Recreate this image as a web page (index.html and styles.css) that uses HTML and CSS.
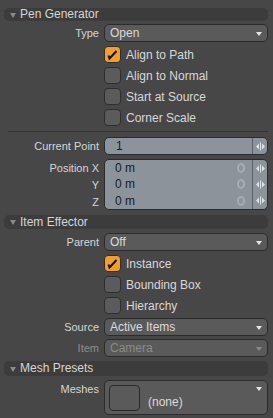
FILE: index.html
```html
<!DOCTYPE html>
<html lang="en">
<head>
  <meta charset="UTF-8" />
  <title>Pen Generator</title>
  <link rel="stylesheet" href="styles.css">
</head>
<body>
  <div class="panel">

    <div class="head h1"><span class="tri"></span>Pen Generator</div>

    <div class="row r-type">
      <label>Type</label>
      <div class="drop">Open<span class="arrow"></span></div>
    </div>

    <div class="checks c1">
      <div class="check on"><span class="box"><svg width="17" height="17" viewBox="0 0 17 17"><path d="M4.5 9.5 L5.5 12.5 L12.5 5" fill="none" stroke="#111" stroke-width="2"/></svg></span>Align to Path</div>
      <div class="check"><span class="box"></span>Align to Normal</div>
      <div class="check"><span class="box"></span>Start at Source</div>
      <div class="check"><span class="box"></span>Corner Scale</div>
    </div>

    <div class="sep"></div>

    <div class="row r-cur">
      <label>Current Point</label>
      <div class="num">
        <span class="val">1</span>
        <span class="spin"><svg width="9" height="9" viewBox="0 0 9 9"><path d="M0 4.5 L3 1.5 L3 7.5 Z M6 1.5 L9 4.5 L6 7.5 Z" fill="#dfe3e7"/><rect x="4" y="0.5" width="1" height="8" fill="#dfe3e7"/></svg></span>
      </div>
    </div>

    <div class="row r-pos">
      <div class="labels">
        <label>Position X</label>
        <label>Y</label>
        <label>Z</label>
      </div>
      <div class="numgroup">
        <div class="nrow"><span class="val">0 m</span><span class="key"></span><span class="spin"><svg width="9" height="9" viewBox="0 0 9 9"><path d="M0 4.5 L3 1.5 L3 7.5 Z M6 1.5 L9 4.5 L6 7.5 Z" fill="#dfe3e7"/><rect x="4" y="0.5" width="1" height="8" fill="#dfe3e7"/></svg></span></div>
        <div class="nrow"><span class="val">0 m</span><span class="key"></span><span class="spin"><svg width="9" height="9" viewBox="0 0 9 9"><path d="M0 4.5 L3 1.5 L3 7.5 Z M6 1.5 L9 4.5 L6 7.5 Z" fill="#dfe3e7"/><rect x="4" y="0.5" width="1" height="8" fill="#dfe3e7"/></svg></span></div>
        <div class="nrow"><span class="val">0 m</span><span class="key"></span><span class="spin"><svg width="9" height="9" viewBox="0 0 9 9"><path d="M0 4.5 L3 1.5 L3 7.5 Z M6 1.5 L9 4.5 L6 7.5 Z" fill="#dfe3e7"/><rect x="4" y="0.5" width="1" height="8" fill="#dfe3e7"/></svg></span></div>
      </div>
    </div>

    <div class="head h2"><span class="tri"></span>Item Effector</div>

    <div class="row r-parent">
      <label>Parent</label>
      <div class="drop">Off<span class="arrow"></span></div>
    </div>

    <div class="checks c2">
      <div class="check on"><span class="box"><svg width="17" height="17" viewBox="0 0 17 17"><path d="M4.5 9.5 L5.5 12.5 L12.5 5" fill="none" stroke="#111" stroke-width="2"/></svg></span>Instance</div>
      <div class="check"><span class="box"></span>Bounding Box</div>
      <div class="check"><span class="box"></span>Hierarchy</div>
    </div>

    <div class="row r-source">
      <label>Source</label>
      <div class="drop">Active Items<span class="arrow"></span></div>
    </div>

    <div class="row r-item off">
      <label>Item</label>
      <div class="drop">Camera<span class="arrow"></span></div>
    </div>

    <div class="head h3"><span class="tri"></span>Mesh Presets</div>

    <div class="row r-mesh">
      <label>Meshes</label>
      <div class="drop preset">
        <span class="thumb"></span>
        <span class="none">(none)</span>
        <span class="arrow"></span>
      </div>
    </div>

  </div>
</body>
</html>
```

FILE: styles.css
```css
body { margin: 0; background: #474747; font-family: "Liberation Sans", Arial, sans-serif; font-size: 11px; color: #d6d6d6; }
.panel { width: 273px; height: 418px; box-sizing: border-box; padding: 8px 5px 0 4px; display: flex; flex-direction: column; }

/* section headers */
.head { height: 13px; line-height: 13px; background: #3c3c3c; border-radius: 5px; color: #d6d6d6; display: flex; align-items: center; font-size: 12px; }
.head .tri { width: 0; height: 0; border-left: 3px solid transparent; border-right: 3px solid transparent; border-top: 5px solid #8a8a8a; margin: 1px 4px 0 6px; }
.h2 { margin-top: 5px; height: 14px; }
.h3 { margin-top: 4px; height: 15px; }

/* label + control rows */
.row { display: grid; grid-template-columns: 95px 1fr; column-gap: 5px; }
.row label { text-align: right; align-self: center; }
.r-type { margin-top: 3px; height: 18px; }
.r-cur { margin-top: 5px; height: 18px; }
.r-pos { margin-top: 4px; height: 51px; }
.r-parent { margin-top: 4px; height: 18px; }
.r-source { margin-top: 4px; height: 18px; }
.r-item { margin-top: 3px; height: 18px; }
.r-mesh { margin-top: 4px; height: 35px; }
.r-mesh label { align-self: start; margin-top: 3px; }

.drop { position: relative; background: #5a5a5a; border: 1px solid #2b2b2b; border-radius: 5px; box-sizing: border-box; padding-left: 5px; display: flex; align-items: center; color: #dadada; font-size: 12px; }
.drop .arrow { position: absolute; right: 5px; top: 7px; width: 0; height: 0; border-left: 3.5px solid transparent; border-right: 3.5px solid transparent; border-top: 4px solid #e6e6e6; }
.off label { color: #8e8e8e; }
.off .drop { color: #8a8a8a; }
.off .drop .arrow { border-top-color: #8a8a8a; }

.preset { padding-left: 4px; }
.preset .thumb { width: 31px; height: 26px; border: 1px solid #2a2a2a; border-radius: 4px; box-sizing: border-box; margin-top: 1px; }
.preset .none { margin: 8px 0 0 8px; }
.preset .arrow { top: 6px; }

/* checkboxes */
.checks { margin-left: 100px; display: flex; flex-direction: column; gap: 4px; }
.c1 { margin-top: 4px; }
.c2 { margin-top: 4px; }
.check { display: flex; align-items: center; height: 17px; font-size: 12px; color: #d8d8d8; }
.check .box { width: 17px; height: 17px; box-sizing: border-box; border: 1px solid #2e2e2e; border-radius: 4px; background: #5b5b5b; margin-right: 5px; display: flex; }
.check .box svg { margin: -1px; }
.check.on .box { background: #f29e2a; }

.sep { margin: 5px 0 0 4px; height: 1px; background: #333333; }

/* number fields */
.num, .numgroup { background: #8c939b; border: 1px solid #2b2b2b; border-radius: 5px; box-sizing: border-box; color: #1b1b1b; font-size: 12px; overflow: hidden; }
.num { display: flex; align-items: center; }
.numgroup { display: grid; grid-template-rows: 1fr 1fr 1fr; }
.nrow { display: flex; align-items: center; }
.val { flex: 1; padding-left: 10px; }
.num .val { padding-left: 11px; }
.key { width: 8px; height: 10px; box-sizing: border-box; border: 2px solid #a6acb2; border-radius: 50%; margin-right: 7px; }
.spin { width: 14px; align-self: stretch; border-left: 1px solid #5d6268; display: flex; align-items: center; justify-content: center; }
.labels { display: grid; grid-template-rows: 1fr 1fr 1fr; }
.labels label { align-self: center; }
```
